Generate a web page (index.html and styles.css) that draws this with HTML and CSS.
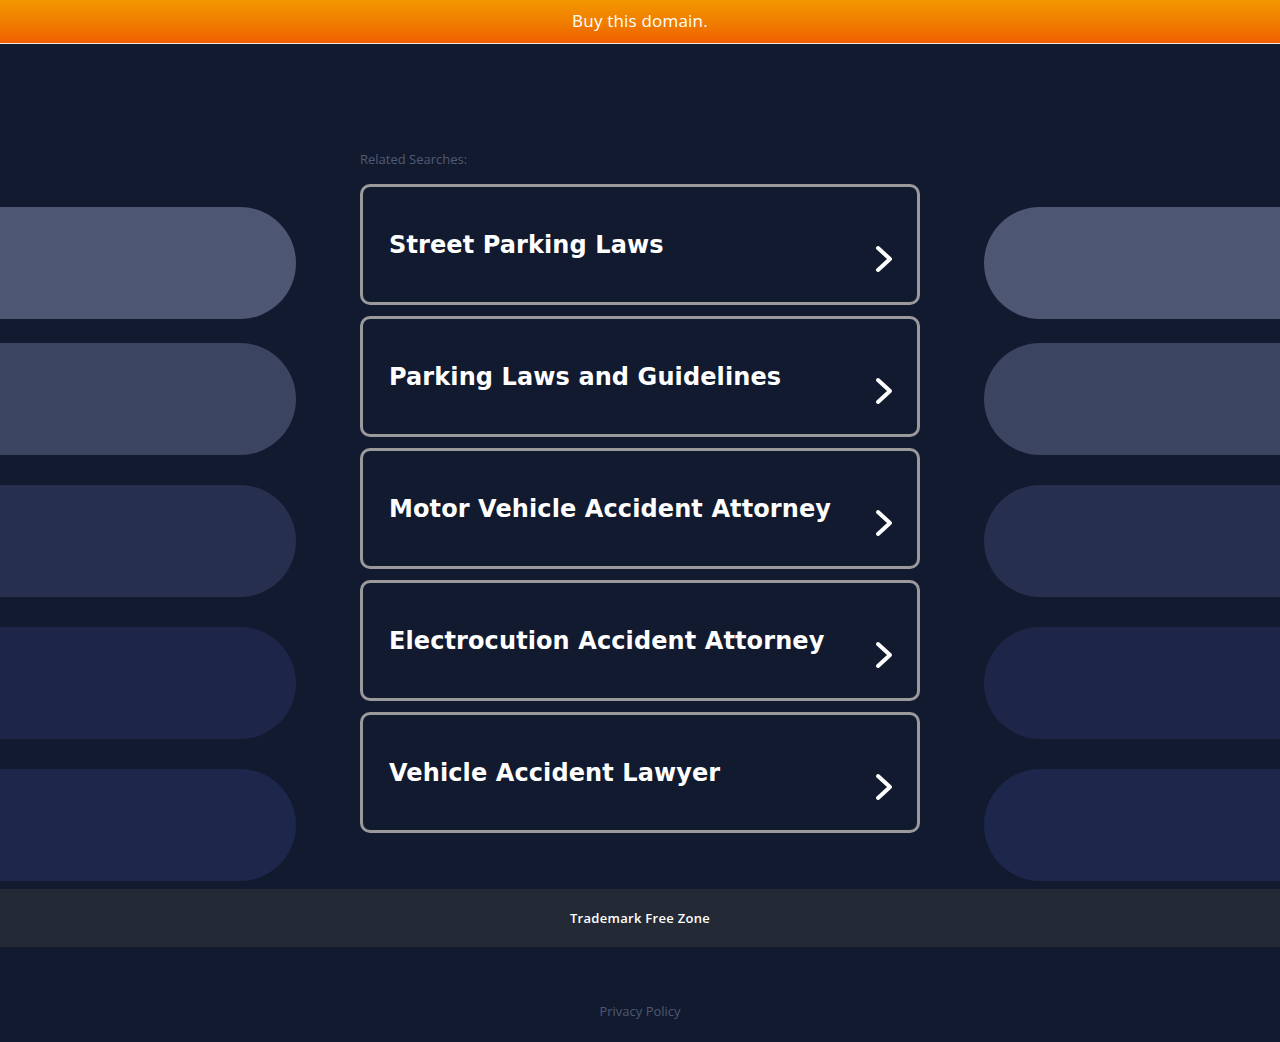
FILE: index.html
```html
<!DOCTYPE html>
<html lang="en">
<head>
<meta charset="utf-8">
<title>Buy this domain</title>
<link rel="stylesheet" href="styles.css">
</head>
<body>
  <header class="topbar">
    <a class="topbar__link" href="#">Buy this domain.</a>
  </header>

  <div class="layout">
    <aside class="pills pills--left">
      <div class="pill pill--1"></div>
      <div class="pill pill--2 pill--tight"></div>
      <div class="pill pill--3"></div>
      <div class="pill pill--4"></div>
      <div class="pill pill--5"></div>
    </aside>

    <main class="searches">
      <p class="searches__label">Related Searches:</p>
      <ul class="searches__list">
        <li><a class="card" href="#"><span class="card__title">Street Parking Laws</span><svg class="card__arrow" viewBox="0 0 20 30" aria-hidden="true"><polyline points="4,4 16,15 4,26"/></svg></a></li>
        <li><a class="card" href="#"><span class="card__title">Parking Laws and Guidelines</span><svg class="card__arrow" viewBox="0 0 20 30" aria-hidden="true"><polyline points="4,4 16,15 4,26"/></svg></a></li>
        <li><a class="card" href="#"><span class="card__title">Motor Vehicle Accident Attorney</span><svg class="card__arrow" viewBox="0 0 20 30" aria-hidden="true"><polyline points="4,4 16,15 4,26"/></svg></a></li>
        <li><a class="card" href="#"><span class="card__title">Electrocution Accident Attorney</span><svg class="card__arrow" viewBox="0 0 20 30" aria-hidden="true"><polyline points="4,4 16,15 4,26"/></svg></a></li>
        <li><a class="card" href="#"><span class="card__title">Vehicle Accident Lawyer</span><svg class="card__arrow" viewBox="0 0 20 30" aria-hidden="true"><polyline points="4,4 16,15 4,26"/></svg></a></li>
      </ul>
    </main>

    <aside class="pills pills--right">
      <div class="pill pill--1"></div>
      <div class="pill pill--2 pill--tight"></div>
      <div class="pill pill--3"></div>
      <div class="pill pill--4"></div>
      <div class="pill pill--5"></div>
    </aside>
  </div>

  <footer class="footer">
    <div class="footer__band">Trademark Free Zone</div>
    <a class="footer__privacy" href="#">Privacy Policy</a>
  </footer>
</body>
</html>
```

FILE: styles.css
```css
* {
  box-sizing: border-box;
}

html,
body {
  margin: 0;
  padding: 0;
}

body {
  background: #121a2f;
  font-family: "Open Sans", "Liberation Sans", sans-serif;
  color: #ffffff;
  min-height: 1042px;
}

a {
  text-decoration: none;
  color: inherit;
}

/* Top purchase bar */
.topbar {
  height: 44px;
  display: flex;
  align-items: center;
  justify-content: center;
  background: linear-gradient(to bottom, #f49700 0%, #f07c00 55%, #ef5f00 100%);
  border-bottom: 1px solid #f3e9e1;
}

.topbar__link {
  font-size: 17px;
  font-weight: 500;
  letter-spacing: 0.2px;
  color: #ffffff;
  padding-bottom: 2px;
}

/* Three columns: decorative pills, search list, decorative pills */
.layout {
  display: grid;
  grid-template-columns: 296px 560px 296px;
  column-gap: 64px;
  align-items: start;
}

.pills {
  display: flex;
  flex-direction: column;
  gap: 30px;
  padding-top: 163px;
}

.pill {
  height: 112px;
}

.pill--tight {
  margin-top: -6px;
}

.pills--left .pill {
  border-radius: 0 56px 56px 0;
}

.pills--right .pill {
  border-radius: 56px 0 0 56px;
}

.pill--1 { background: #4d5773; }
.pill--2 { background: #3b4460; }
.pill--3 { background: #262f4d; }
.pill--4 { background: #1d2648; }
.pill--5 { background: #1d274b; }

/* Search list */
.searches {
  padding-top: 107px;
  padding-bottom: 56px;
}

.searches__label {
  margin: 0 0 16px;
  font-size: 13px;
  line-height: 17px;
  color: #505a74;
}

.searches__list {
  list-style: none;
  margin: 0;
  padding: 0;
  display: flex;
  flex-direction: column;
  gap: 11px;
}

.card {
  height: 121px;
  display: flex;
  align-items: center;
  justify-content: space-between;
  padding: 0 23px 0 26px;
  border: 3px solid #9a9a9c;
  border-radius: 10px;
}

.card__title {
  font-family: "DejaVu Sans", "Liberation Sans", sans-serif;
  font-weight: 700;
  font-size: 24px;
  line-height: 30px;
  color: #ffffff;
  letter-spacing: 0.1px;
}

.card__arrow {
  width: 20px;
  height: 30px;
  margin-top: 28px;
  fill: none;
  stroke: #ffffff;
  stroke-width: 4;
  stroke-linecap: round;
  stroke-linejoin: round;
}

/* Footer */
.footer {
  display: flex;
  flex-direction: column;
  align-items: center;
}

.footer__band {
  width: 100%;
  height: 58px;
  display: flex;
  align-items: center;
  justify-content: center;
  background: #232a35;
  font-size: 13px;
  font-weight: 600;
  letter-spacing: 0.3px;
  color: #ffffff;
}

.footer__privacy {
  margin-top: 56px;
  font-size: 13px;
  line-height: 17px;
  color: #4f5870;
}
```
